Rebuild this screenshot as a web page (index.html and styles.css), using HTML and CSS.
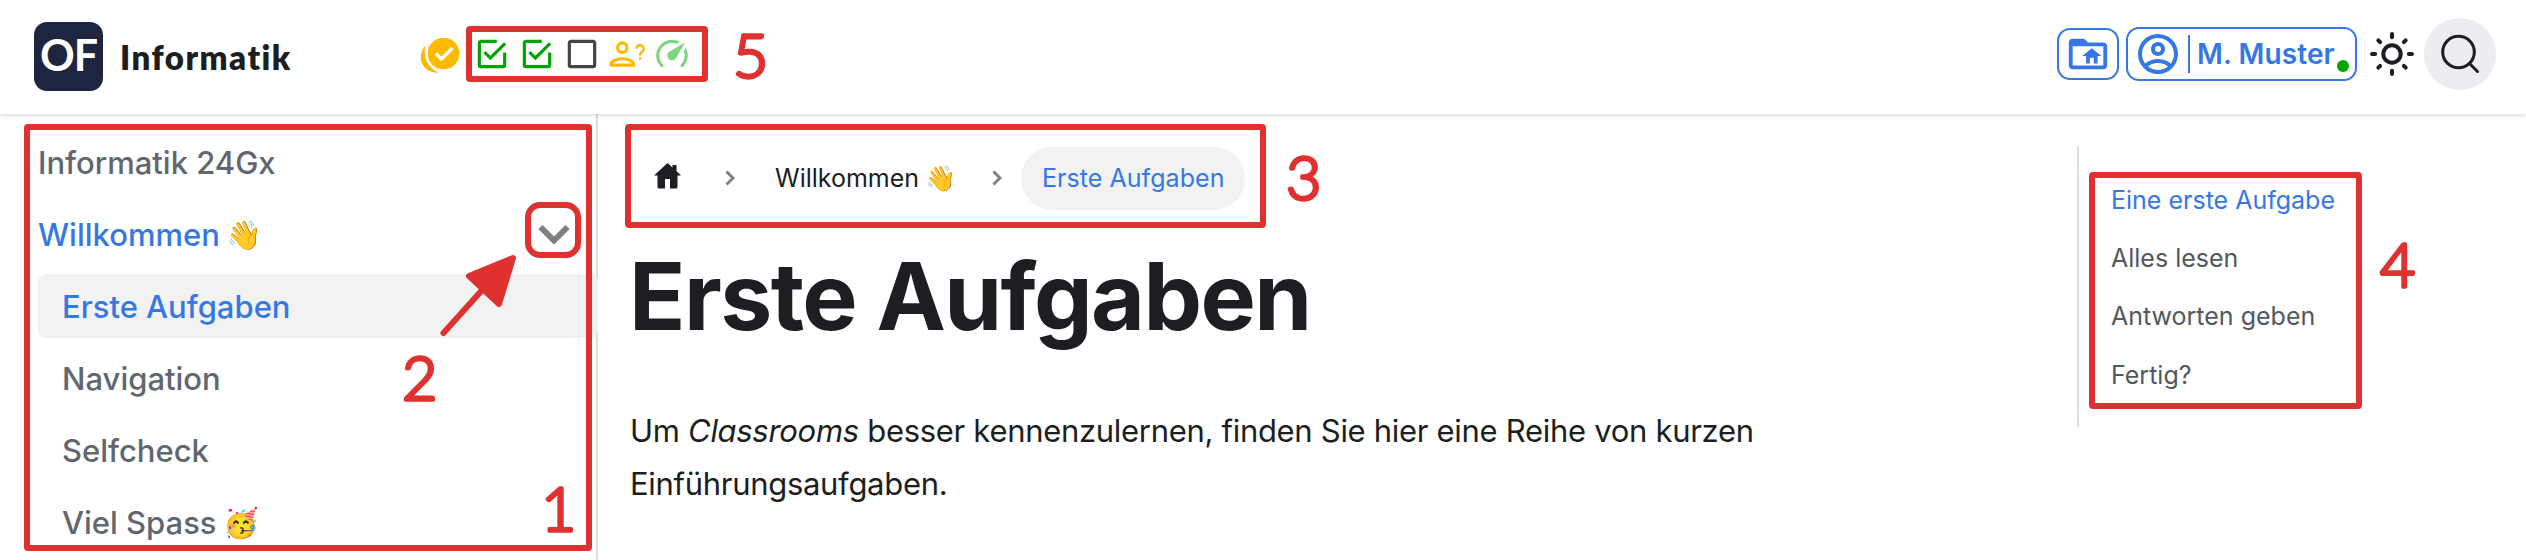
FILE: index.html
```html
<!DOCTYPE html>
<html lang="de">
<head>
<meta charset="utf-8">
<title>Erste Aufgaben | Informatik</title>
<link rel="stylesheet" href="styles.css">
</head>
<body>
<header class="navbar">
  <a class="brand"><span class="logo">OF</span><b class="brand-name">Informatik</b></a>
  <div class="progress">
    <svg class="all-done" viewBox="0 0 40 36"><circle cx="23.500" cy="15.500" r="15.800" fill="#ffba00"/><path d="M16 15.500l5.500 5.500L32.500 10" fill="none" stroke="#fff" stroke-width="3.400"/><path d="M5.500 7.500C-3.500 17 0 35 19 35C8.500 30 2.500 20 5.500 7.500Z" fill="#ffba00"/></svg>
    <svg class="task done" viewBox="0 0 24 24"><path d="M19,19H5V5H15V3H5C3.890,3 3,3.890 3,5V19A2,2 0 0,0 5,21H19A2,2 0 0,0 21,19V11H19M7.910,10.080L6.500,11.500L11,16L21,6L19.590,4.580L11,13.170L7.910,10.080Z"/></svg>
    <svg class="task done" viewBox="0 0 24 24"><path d="M19,19H5V5H15V3H5C3.890,3 3,3.890 3,5V19A2,2 0 0,0 5,21H19A2,2 0 0,0 21,19V11H19M7.910,10.080L6.500,11.500L11,16L21,6L19.590,4.580L11,13.170L7.910,10.080Z"/></svg>
    <svg class="task open" viewBox="0 0 24 24"><path d="M19,3H5C3.890,3 3,3.890 3,5V19A2,2 0 0,0 5,21H19A2,2 0 0,0 21,19V5C21,3.890 20.100,3 19,3M19,5V19H5V5H19Z"/></svg>
    <svg class="task asked" viewBox="0 0 24 24"><path d="M13 8A4 4 0 1 0 5 8A4 4 0 0 0 13 8M11 8A2 2 0 1 1 7 8A2 2 0 0 1 11 8M1 18V20H17V18C17 15.340 11.670 14 9 14S1 15.340 1 18M3 18C3.200 17.290 6.300 16 9 16S14.780 17.280 15 18Z"/><path d="M18 8.700A2.250 2.250 0 1 1 21.400 10.600Q20.250 11.500 20.250 13" fill="none" stroke="#ffba00" stroke-width="1.500"/><path d="M19.500 14h1.500v1.600h-1.500z"/></svg>
    <svg class="task speed" viewBox="0 0 24 24"><path d="M12,16A3,3 0 0,1 9,13C9,11.880 9.610,10.900 10.500,10.390L20.210,4.770L14.680,14.350C14.180,15.330 13.170,16 12,16M12,3C13.810,3 15.500,3.500 16.970,4.320L14.870,5.530C14,5.190 13,5 12,5A8,8 0 0,0 4,13C4,15.210 4.890,17.210 6.340,18.650C6.740,19.040 6.740,19.670 6.350,20.060C5.960,20.450 5.320,20.450 4.930,20.070C3.120,18.260 2,15.760 2,13A10,10 0 0,1 12,3M22,13C22,15.760 20.880,18.260 19.070,20.070C18.680,20.450 18.050,20.450 17.660,20.060C17.270,19.670 17.270,19.040 17.660,18.650C19.110,17.200 20,15.210 20,13C20,12 19.810,11 19.460,10.100L20.670,8C21.500,9.500 22,11.180 22,13Z"/></svg>
  </div>
  <div class="tools">
    <a class="btn folder"><svg viewBox="0 0 24 24"><path d="M20 6H12L10 4H4C2.890 4 2 4.890 2 6V18C2 19.110 2.890 20 4 20H20C21.110 20 22 19.110 22 18V8C22 6.890 21.110 6 20 6M20 18H4V8H20V18M11 17V13H9L14 9L19 13H17V17H15V14H13V17Z"/></svg></a>
    <a class="btn user"><svg viewBox="0 0 24 24"><path d="M12,2A10,10 0 0,0 2,12A10,10 0 0,0 12,22A10,10 0 0,0 22,12A10,10 0 0,0 12,2M7.070,18.280C7.500,17.380 10.120,16.500 12,16.500C13.880,16.500 16.500,17.380 16.930,18.280C15.570,19.360 13.860,20 12,20C10.140,20 8.430,19.360 7.070,18.280M18.360,16.830C16.930,15.090 13.460,14.500 12,14.500C10.540,14.500 7.070,15.090 5.640,16.830C4.620,15.500 4,13.820 4,12C4,7.590 7.590,4 12,4C16.410,4 20,7.590 20,12C20,13.820 19.380,15.500 18.360,16.830M12,6C10.060,6 8.500,7.560 8.500,9.500C8.500,11.440 10.060,13 12,13C13.940,13 15.500,11.440 15.500,9.500C15.500,7.560 13.940,6 12,6M12,11A1.500,1.500 0 0,1 10.500,9.500A1.500,1.500 0 0,1 12,8A1.500,1.500 0 0,1 13.500,9.500A1.500,1.500 0 0,1 12,11Z"/></svg><i class="rule"></i><span class="user-name">M. Muster</span><i class="online"></i></a>
    <svg class="sun" viewBox="0 0 44 44"><circle cx="22" cy="22" r="8.700"/><path d="M22 2v3.200M22 38.800V42M2 22h3.200M38.800 22H42M8.300 8.300l1.800 1.800M33.900 33.900l1.800 1.800M35.700 8.300l-1.800 1.800M10.100 33.900l-1.800 1.800"/></svg>
    <a class="search"><svg viewBox="0 0 40 40"><circle cx="18.500" cy="18" r="15.800"/><path d="M29.500 29.500l8 8"/></svg></a>
  </div>
</header>
<div class="page">
  <nav class="sidebar">
    <a class="item">Informatik 24Gx</a>
    <a class="item current">Willkommen <span class="emoji">👋</span><svg class="caret" viewBox="0 0 32 20"><path d="M2.500 3L16 16.500L29.500 3"/></svg></a>
    <a class="item sub active">Erste Aufgaben</a>
    <a class="item sub">Navigation</a>
    <a class="item sub">Selfcheck</a>
    <a class="item sub">Viel Spass <span class="emoji">🥳</span></a>
  </nav>
  <main class="content">
    <nav class="crumbs">
      <svg class="home" viewBox="0 0 27 26"><path d="M13.500 0L0 12.500h3.500V24q0 1.500 1.500 1.500h6V16h5v9.500h6q1.500 0 1.500-1.500V12.500H27L22.500 8V2h-4v2.500Z"/></svg>
      <svg class="sep" viewBox="0 0 10 16"><path d="M1.500 1.500L8 8l-6.500 6.500"/></svg>
      <span class="crumb">Willkommen <span class="emoji">👋</span></span>
      <svg class="sep" viewBox="0 0 10 16"><path d="M1.500 1.500L8 8l-6.500 6.500"/></svg>
      <span class="pill">Erste Aufgaben</span>
    </nav>
    <h1>Erste Aufgaben</h1>
    <p>Um <em>Classrooms</em> besser kennenzulernen, finden Sie hier eine Reihe von kurzen<br>Einführungsaufgaben.</p>
  </main>
  <aside class="toc">
    <a class="here">Eine erste Aufgabe</a>
    <a>Alles lesen</a>
    <a>Antworten geben</a>
    <a>Fertig?</a>
  </aside>
</div>
<svg class="notes" viewBox="0 0 2526 560">
  <g class="frames">
    <rect x="469" y="29" width="236" height="50" rx="1"/>
    <rect x="27" y="127" width="562" height="421" rx="1"/>
    <rect x="528" y="205" width="50" height="50" rx="12"/>
    <rect x="628" y="127" width="635" height="98" rx="1"/>
    <rect x="2092" y="175" width="267" height="231" rx="1"/>
    <path d="M443.500 333L484 288"/>
    <path class="head" d="M513 258L469 276L499 304Z"/>
  </g>
  <g class="numbers">
    <text x="541" y="531">1</text>
    <text x="402" y="400">2</text>
    <text x="1286" y="200">3</text>
    <text x="2380" y="287">4</text>
    <text x="733" y="78">5</text>
  </g>
</svg>
</body>
</html>
```
FILE: styles.css
```css
* { box-sizing: border-box; }
body { margin: 0; width: 2526px; height: 560px; overflow: hidden; position: relative; background: #fff; color: #1c1e21; font-family: Inter, sans-serif; }
svg { display: block; flex: none; }
.navbar { position: relative; height: 114px; display: flex; align-items: flex-start; background: #fff; box-shadow: 0 2px 4px rgba(0,0,0,.12); z-index: 1; }
.brand { width: 420px; padding: 22px 0 0 34px; display: flex; gap: 17px; }
.logo { width: 69px; height: 69px; border-radius: 13px; background: #1e2540; color: #fff; font: 700 43px/66px Lato, sans-serif; letter-spacing: -1px; text-align: center; }
.brand-name { font: 800 33px/70px Lato, sans-serif; letter-spacing: 1.500px; font-variant-ligatures: none; }
.progress { display: flex; padding-top: 35px; align-items: flex-start; }
.all-done { width: 40px; height: 36px; margin: 3px 13px 0 0; }
.task { width: 38px; height: 38px; margin-right: 7px; }
.done { fill: #00a400; }
.open { fill: #444; }
.asked { fill: #ffba00; }
.speed { fill: #82d482; }
.tools { margin-left: auto; padding-right: 30px; height: 108px; display: flex; align-items: center; }
.btn { border: 2px solid #3578e5; border-radius: 13px; color: #3578e5; fill: #3578e5; display: flex; align-items: center; }
.folder { width: 62px; height: 52px; justify-content: center; margin-right: 7px; }
.folder svg { width: 46px; height: 46px; }
.user { position: relative; width: 231px; height: 54px; padding-left: 6px; margin-right: 13px; }
.user svg { width: 48px; height: 48px; }
.rule { width: 2px; height: 38px; background: #3578e5; margin: 0 7px 0 6px; }
.user-name { font-weight: 600; font-size: 28px; letter-spacing: .1px; }
.online { position: absolute; right: 6px; bottom: 7px; width: 12px; height: 12px; border-radius: 50%; background: #00a400; }
.sun { width: 44px; height: 44px; margin-right: 10px; fill: none; stroke: #1c1e21; stroke-width: 4; stroke-linecap: round; }
.search { width: 72px; height: 72px; border-radius: 50%; background: #ebedf0; display: flex; align-items: center; justify-content: center; }
.search svg { width: 40px; height: 40px; fill: none; stroke: #1c1e21; stroke-width: 3; stroke-linecap: round; }
.page { display: grid; grid-template-columns: 598px 1479px 449px; height: 446px; }
.sidebar { border-right: 2px solid #dadde1; padding: 16px 0 0 38px; display: flex; flex-direction: column; gap: 8px; }
.item { height: 64px; flex: none; display: flex; align-items: center; color: #606770; font-weight: 450; font-size: 31px; letter-spacing: 0; white-space: pre; }
.emoji { font-size: .93em; margin-left: -.06em; }
.item.current, .item.active, .toc .here { color: #3578e5; }
.sub { padding-left: 24px; }
.active { background: #f2f2f2; border-radius: 8px; margin-right: -2px; }
.caret { width: 32px; height: 20px; margin-left: auto; margin-right: 26px; fill: none; stroke: #808080; stroke-width: 6; }
.content { padding: 32px 0 0 32px; }
.crumbs { display: flex; align-items: center; height: 64px; font-size: 25px; }
.crumbs .emoji { font-size: 1em; margin-left: -.03em; }
.home { width: 27px; height: 30px; margin: 0 44px 4px 24px; fill: #1c1e21; }
.sep { width: 10px; height: 16px; fill: none; stroke: #808080; stroke-width: 3; }
.crumb { display: flex; align-items: center; width: 257px; padding-left: 40px; white-space: pre; }
.pill { margin-left: 19px; height: 63px; line-height: 63px; padding: 0 21px; border-radius: 32px; background: #f2f2f2; color: #3578e5; letter-spacing: .05px; }
h1 { margin: 26px 0 0; font-size: 93px; line-height: 120px; font-weight: 700; letter-spacing: -1.600px; text-indent: -1px; white-space: nowrap; }
p { margin: 48px 0 0; font-size: 31px; line-height: 53px; letter-spacing: -.3px; white-space: nowrap; }
.toc { align-self: start; margin-top: 32px; height: 281px; border-left: 2px solid #dadde1; padding: 25px 0 0 32px; display: flex; flex-direction: column; color: #525860; font-size: 25px; }
.toc a { height: 58.200px; line-height: 58px; }
.notes { position: absolute; left: 0; top: 0; width: 2526px; height: 560px; z-index: 2; }
.frames { fill: none; stroke: #e03131; stroke-width: 6; stroke-linecap: round; stroke-linejoin: round; }
.head { fill: #e03131; }
.numbers { font: 300 61px Lato, sans-serif; fill: #e03131; stroke: #e03131; stroke-width: 3.400; stroke-linejoin: round; }
```
